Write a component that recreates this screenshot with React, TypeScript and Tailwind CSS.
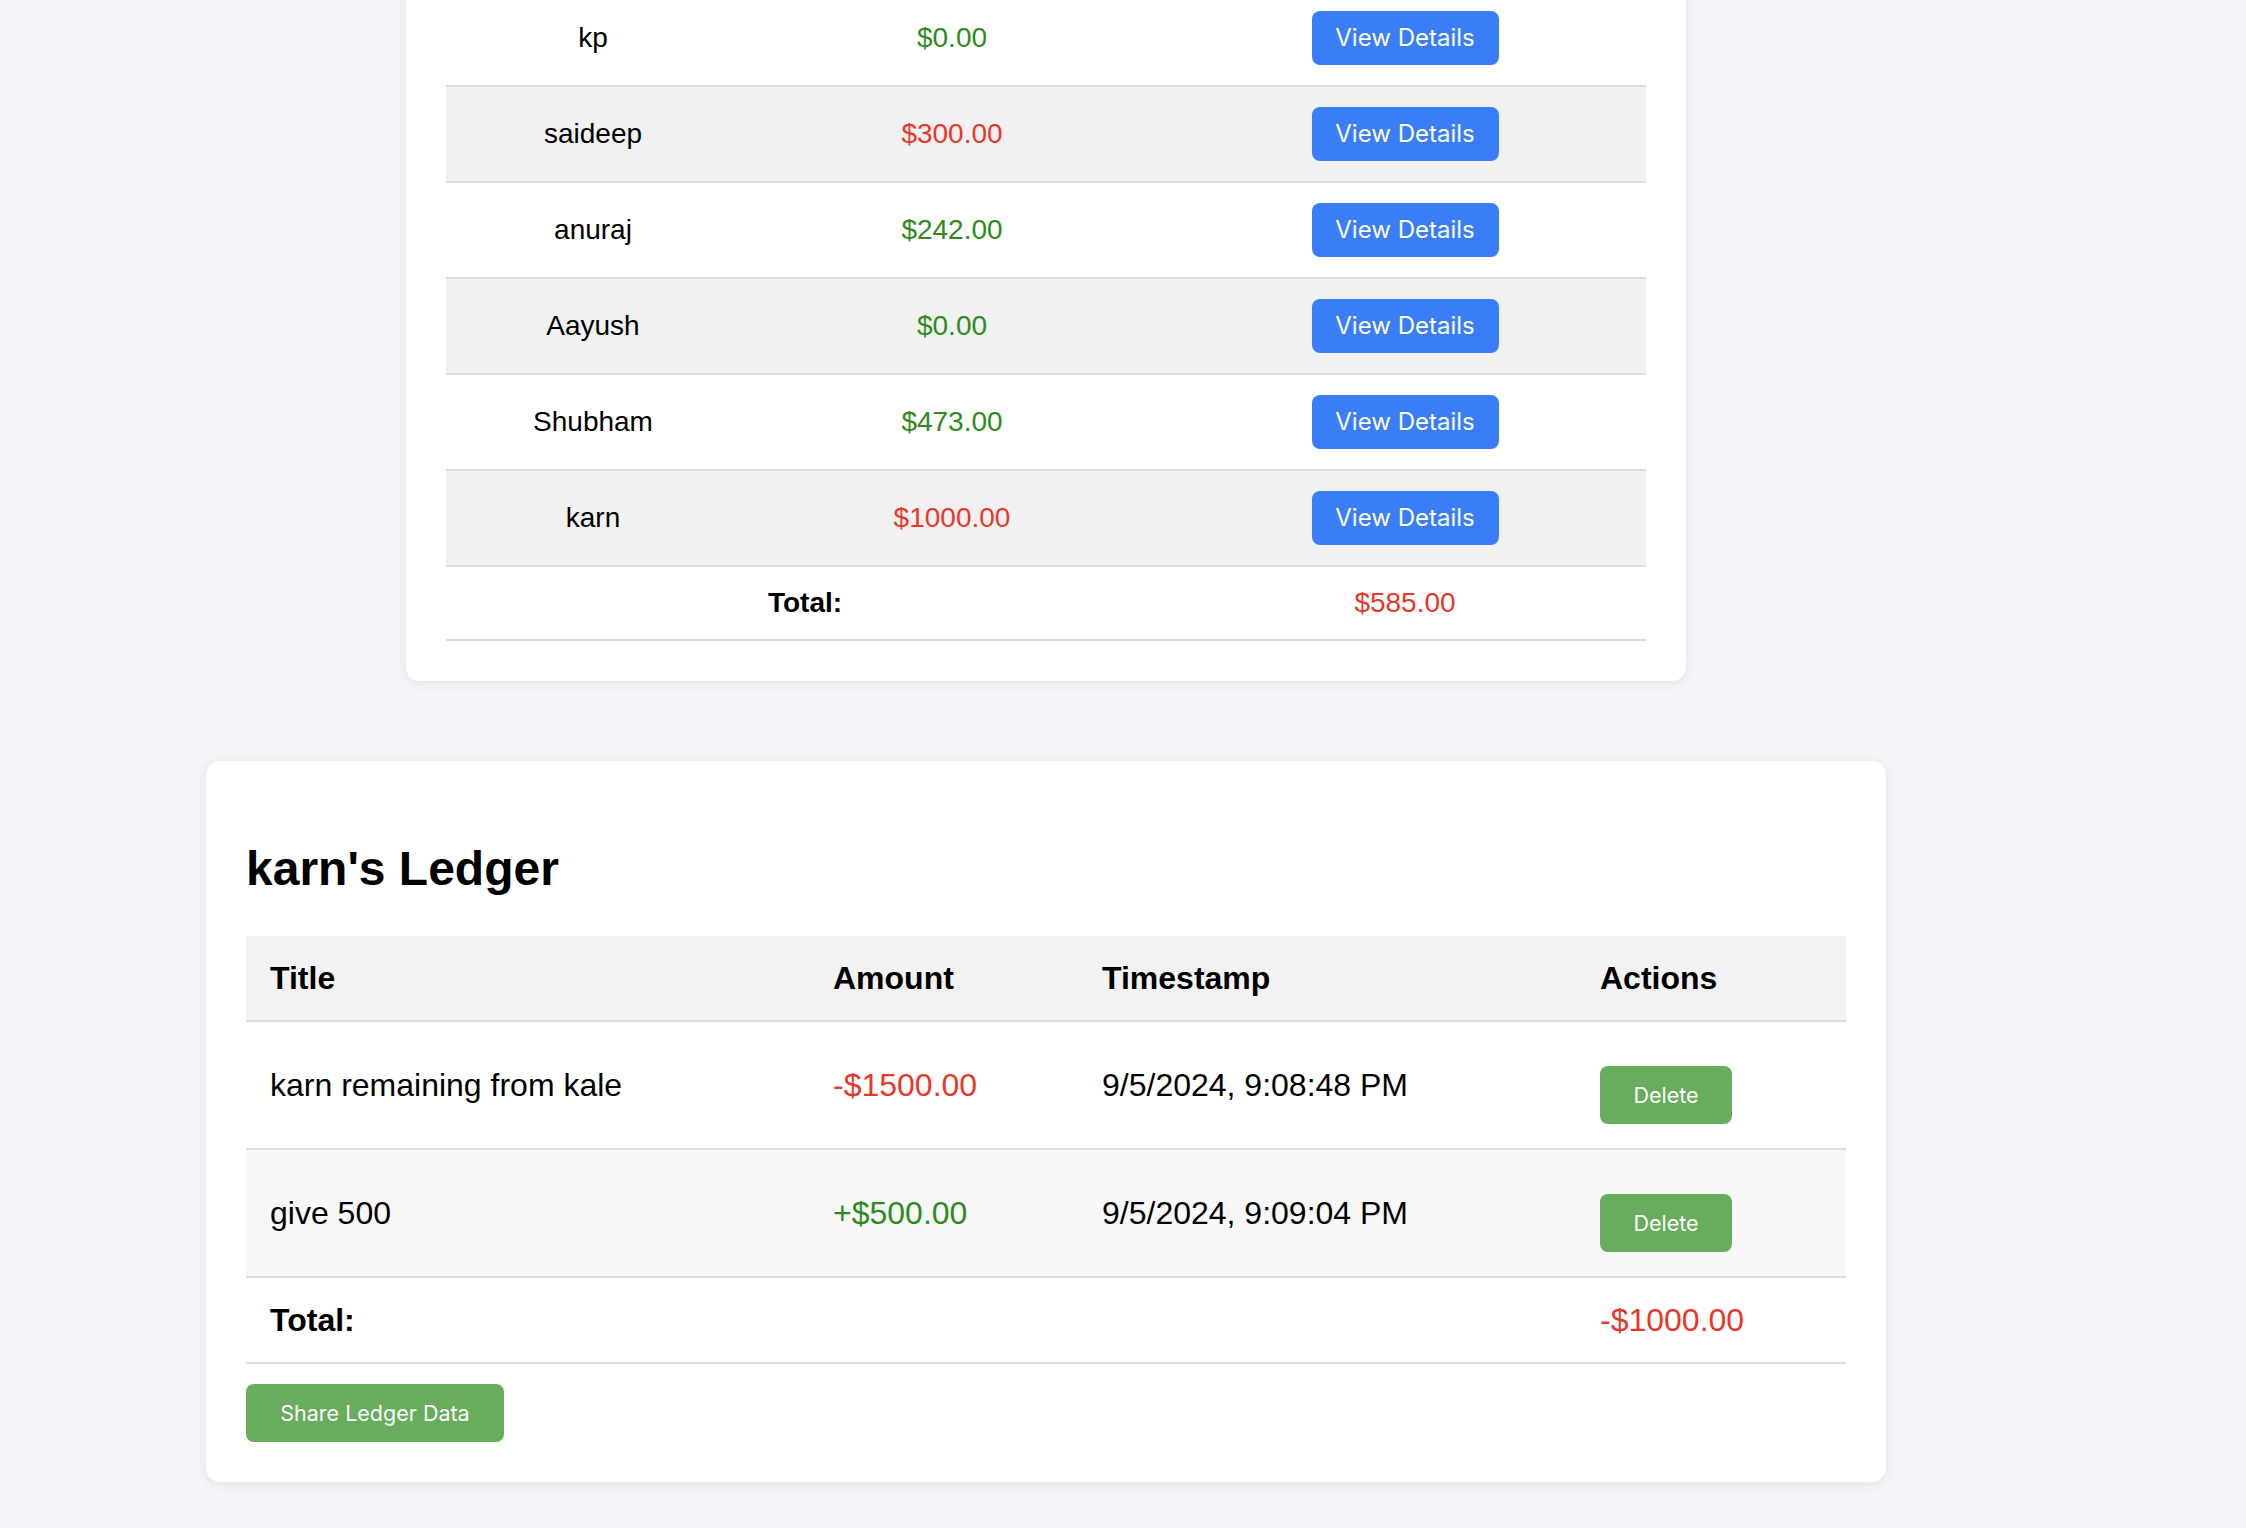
const balances = [
  { name: 'kp', amount: 0, owes: false },
  { name: 'saideep', amount: 300, owes: true },
  { name: 'anuraj', amount: 242, owes: false },
  { name: 'Aayush', amount: 0, owes: false },
  { name: 'Shubham', amount: 473, owes: false },
  { name: 'karn', amount: 1000, owes: true },
];

const entries = [
  { title: 'karn remaining from kale', amount: -1500, time: '9/5/2024, 9:08:48 PM' },
  { title: 'give 500', amount: 500, time: '9/5/2024, 9:09:04 PM' },
];

const sans = "font-['Liberation_Sans',Arial,sans-serif]";
const ui = "font-['Inter','Noto_Sans',sans-serif]";

function Summary() {
  return (
    <div className="-mt-[49px] w-[1280px] rounded-[14px] bg-white px-[40px] pt-[40px] pb-[40px] shadow-[0_2px_12px_rgba(0,0,0,0.08)]">
      <table className={`w-[1200px] border-collapse text-[28px] leading-[32px] text-black ${sans}`}>
        <colgroup>
          <col className="w-[294px]" />
          <col className="w-[424px]" />
          <col className="w-[482px]" />
        </colgroup>
        <tbody>
          {balances.map((b, i) => (
            <tr key={b.name} className={`border-b-2 border-[#dddddd] ${i % 2 === 1 ? 'bg-[#f1f1f1]' : 'bg-white'}`}>
              <td className="py-[20px] text-center align-middle">{b.name}</td>
              <td className={`py-[20px] text-center align-middle ${b.owes ? 'text-[#e8372a]' : 'text-[#2e8a1e]'}`}>
                ${b.amount.toFixed(2)}
              </td>
              <td className="py-[20px] text-center align-middle">
                <button className={`h-[54px] w-[187px] rounded-[8px] bg-[#3a7ef7] text-[24px] leading-[24px] text-white ${ui}`}>
                  View Details
                </button>
              </td>
            </tr>
          ))}
          <tr className="border-b-2 border-[#dddddd] bg-white">
            <td colSpan={2} className="py-[20px] text-center font-bold">Total:</td>
            <td className="py-[20px] text-center text-[#e8372a]">$585.00</td>
          </tr>
        </tbody>
      </table>
    </div>
  );
}

function Ledger() {
  return (
    <div className={`w-[1680px] rounded-[14px] bg-white p-[40px] shadow-[0_2px_12px_rgba(0,0,0,0.08)] ${sans}`}>
      <h2 className="my-[40px] text-[48px] leading-[55px] font-bold text-black">karn's Ledger</h2>
      <table className="w-[1600px] border-collapse text-left text-[32px] leading-[36px] text-black">
        <colgroup>
          <col className="w-[563px]" />
          <col className="w-[269px]" />
          <col className="w-[498px]" />
          <col className="w-[270px]" />
        </colgroup>
        <thead>
          <tr className="border-b-2 border-[#dddddd] bg-[#f2f2f2]">
            <th className="px-[24px] py-[24px] font-bold">Title</th>
            <th className="px-[24px] py-[24px] font-bold">Amount</th>
            <th className="px-[24px] py-[24px] font-bold">Timestamp</th>
            <th className="px-[24px] py-[24px] font-bold">Actions</th>
          </tr>
        </thead>
        <tbody>
          {entries.map((e, i) => (
            <tr key={e.time} className={`border-b-2 border-[#dddddd] ${i % 2 === 1 ? 'bg-[#f8f8f8]' : 'bg-white'}`}>
              <td className="px-[24px] py-[24px] align-middle">{e.title}</td>
              <td className={`px-[24px] py-[24px] align-middle ${e.amount < 0 ? 'text-[#e8372a]' : 'text-[#2e8a1e]'}`}>
                {e.amount < 0 ? '-' : '+'}${Math.abs(e.amount).toFixed(2)}
              </td>
              <td className="px-[24px] py-[24px] align-middle">{e.time}</td>
              <td className="px-[24px] py-[24px] align-middle">
                <div className="pt-[20px]">
                  <button className={`block h-[58px] w-[132px] rounded-[8px] bg-[#67ad5b] text-[21.5px] leading-[24px] text-white ${ui}`}>
                    Delete
                  </button>
                </div>
              </td>
            </tr>
          ))}
          <tr className="border-b-2 border-[#dddddd] bg-white">
            <td className="px-[24px] py-[24px] font-bold">Total:</td>
            <td className="px-[24px] py-[24px]"></td>
            <td className="px-[24px] py-[24px]"></td>
            <td className="px-[24px] py-[24px] text-[#e8372a]">-$1000.00</td>
          </tr>
        </tbody>
      </table>
      <button className={`mt-[20px] block h-[58px] w-[258px] rounded-[8px] bg-[#67ad5b] text-[21.5px] leading-[24px] text-white ${ui}`}>
        Share Ledger Data
      </button>
    </div>
  );
}

export default function App() {
  return (
    <div className="min-h-screen w-full overflow-hidden bg-[#f4f4f9]">
      <div className="flex w-[2092px] flex-col items-center gap-[80px] pb-[45px]">
        <Summary />
        <Ledger />
      </div>
    </div>
  );
}
